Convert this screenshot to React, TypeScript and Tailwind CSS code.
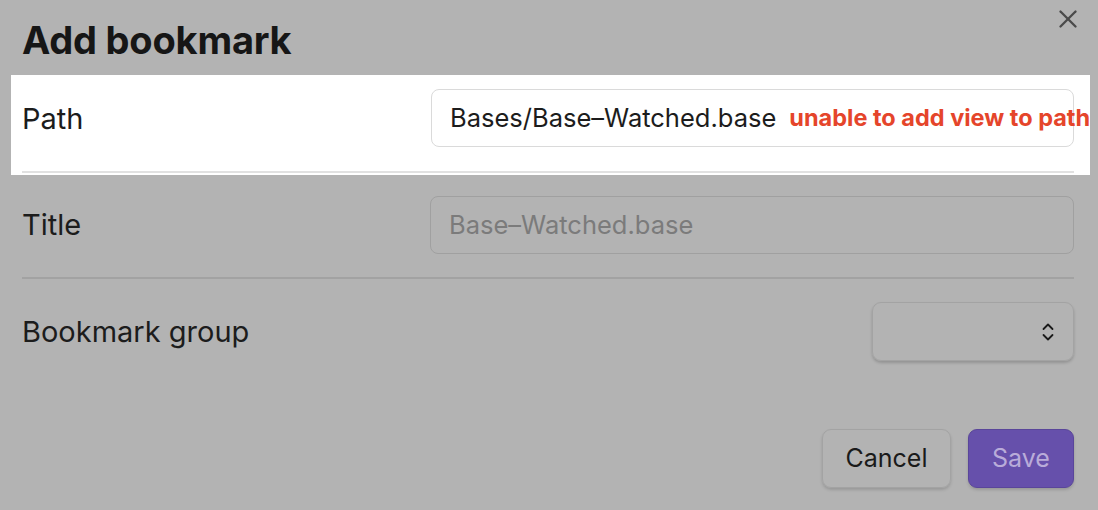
import { X } from "lucide-react";

const font = { fontFamily: "Inter, 'Noto Sans', sans-serif" };

function ChevronsUpDown() {
  return (
    <svg width="14" height="20" viewBox="0 0 14 20" fill="none" stroke="#1a1a1a" strokeWidth="1.8" strokeLinecap="round" strokeLinejoin="round">
      <path d="M2.5 7 L7 2.5 L11.5 7" />
      <path d="M2.5 13 L7 17.5 L11.5 13" />
    </svg>
  );
}

export default function App() {
  return (
    <div
      className="relative w-[1098px] h-[510px] bg-[#b3b3b3] pl-[22px] pr-[24px] overflow-hidden text-[#1c1c1c]"
      style={font}
    >
      {/* close */}
      <button className="absolute right-[15px] top-[4px] text-[#4a4a4a]">
        <X size={30} strokeWidth={1.9} />
      </button>

      <h1 className="pt-[17px] text-[38px] leading-[46px] font-bold tracking-[-0.2px] text-[#161616]">
        Add bookmark
      </h1>

      {/* path row, highlighted */}
      <div className="mt-[12px] -ml-[11px] -mr-[16px] pl-[11px] pr-[16px] bg-white pt-[14px] pb-[2px] overflow-hidden">
        <div className="flex items-center justify-between pb-[24px] border-b-[2px] border-[#e1e1e1]">
          <span className="text-[29px] pt-[2px]">Path</span>
          <div className="w-[643px] h-[58px] rounded-[8px] border border-[#dadada] bg-white flex items-center pl-[18px] whitespace-nowrap">
            <span className="text-[25.5px] text-[#1c1c1c]">Bases/Base–Watched.base</span>
            <span className="ml-[13px] text-[23.5px] font-bold text-[#e5452b]">unable to add view to path</span>
          </div>
        </div>
      </div>

      {/* title row */}
      <div className="flex items-center justify-between pt-[21px] pb-[23px] border-b-[2px] border-[#a2a2a2]">
        <span className="text-[29px]">Title</span>
        <div className="w-[644px] h-[58px] rounded-[8px] border-[1.5px] border-[#a0a0a0] flex items-center pl-[18px]">
          <span className="text-[25.5px] text-[#7b7b7b]">Base–Watched.base</span>
        </div>
      </div>

      {/* group row */}
      <div className="flex items-center justify-between pt-[23px] pb-[24px]">
        <span className="text-[29px]">Bookmark group</span>
        <div className="w-[202px] h-[59px] rounded-[9px] border-[1.5px] border-[#a3a3a3] shadow-[0_2px_3px_rgba(0,0,0,0.18)] flex items-center justify-end pr-[18px]">
          <ChevronsUpDown />
        </div>
      </div>

      {/* actions */}
      <div className="flex justify-end gap-[17px] mt-[44px]">
        <button className="w-[129px] h-[59px] rounded-[9px] border-[1.5px] border-[#a3a3a3] shadow-[0_2px_3px_rgba(0,0,0,0.15)] text-[25px] text-[#1a1a1a]">
          Cancel
        </button>
        <button className="w-[106px] h-[59px] rounded-[9px] bg-[#6650ab] border border-[#5a469a] shadow-[0_2px_3px_rgba(0,0,0,0.15)] text-[25px] text-[#b9acd9]">
          Save
        </button>
      </div>
    </div>
  );
}
